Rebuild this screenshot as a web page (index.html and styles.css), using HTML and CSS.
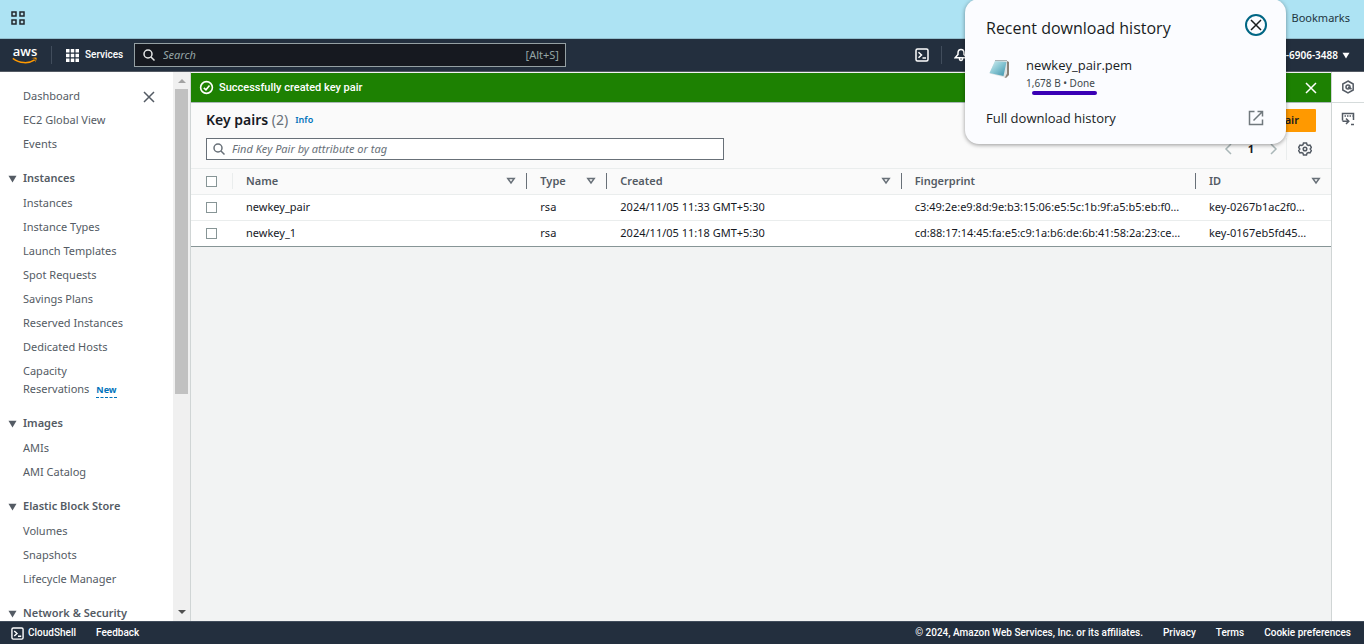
FILE: index.html
```
<!DOCTYPE html>
<html lang="en">
<head>
<meta charset="utf-8">
<title>Key pairs | EC2</title>
<link rel="stylesheet" href="styles.css">
</head>
<body>
<svg class="defs" aria-hidden="true">
  <symbol id="close" viewBox="0 0 12 12"><path d="M1 1l10 10M11 1L1 11"/></symbol>
  <symbol id="search" viewBox="0 0 12 12"><circle cx="5" cy="5" r="4"/><path d="M8 8l3.5 3.5"/></symbol>
  <symbol id="shell" viewBox="0 0 14 14"><rect x="1" y="1" width="12" height="12" rx="1.5"/><path d="M3.5 4.2L6.5 7l-3 2.800M7.500 10h3.500"/></symbol>
  <symbol id="sort" viewBox="0 0 10 8"><path d="M1.800 1.500h6.400L5 6z"/></symbol>
  <symbol id="caret" viewBox="0 0 9 8"><path d="M.5 .8h8L4.500 7.500z"/></symbol>
</svg>

<header class="browser-bar">
  <button class="icon-button" aria-label="Tab groups">
    <svg class="tabs-icon" viewBox="0 0 14 14"><path d="M1 1h4v4H1zM9 1h4v4H9zM1 9h4v4H1zM9 9h4v4H9z"/></svg>
  </button>
  <span class="bookmarks">Bookmarks</span>
</header>

<nav class="top-nav" aria-label="Console">
  <a class="logo" href="#" aria-label="aws">
    <span class="logo-word">aws</span>
    <svg class="logo-smile" viewBox="0 0 26 7"><path class="smile" d="M.8 1.300C7.500 6.500 16.500 7 22.700 2.900"/><path class="smile-tip" d="M19.500 1.300c2-1 4.500-1 5-.5.500.6 0 3-1.600 4.800.6-1.800 1-3.200.6-3.600s-2.100-.5-4-.7z"/></svg>
  </a>
  <button class="services">
    <svg viewBox="0 0 13 13"><path d="M0 0h3.500v3.500H0zM4.750 0h3.500v3.500h-3.500zM9.500 0H13v3.500H9.500zM0 4.750h3.500v3.500H0zM4.750 4.750h3.500v3.500h-3.500zM9.500 4.750H13v3.500H9.500zM0 9.500h3.500V13H0zM4.750 9.500h3.500V13h-3.500zM9.500 9.500H13V13H9.500z"/></svg>
    Services
  </button>
  <label class="nav-search">
    <svg class="line"><use href="#search"/></svg>
    <input type="search" placeholder="Search" aria-label="Search">
    <span>[Alt+S]</span>
  </label>
  <div class="nav-tools">
    <button class="icon-button" aria-label="CloudShell"><svg class="shell-icon"><use href="#shell"/></svg></button>
    <button class="icon-button bell" aria-label="Notifications"><svg viewBox="0 0 14 14"><path d="M7 1.500C5 1.500 4 3 4 5v1.500L1.200 9.800h11.600L10 6.500V5c0-2-1-3.500-3-3.500zM5.500 10.500c0 2.600 3 2.600 3 0"/></svg></button>
  </div>
  <button class="account">-6906-3488 <svg><use href="#caret"/></svg></button>
</nav>

<div class="workspace">
  <aside class="sidebar">
    <div class="side-nav">
      <button class="icon-button side-close" aria-label="Close navigation"><svg class="line"><use href="#close"/></svg></button>
      <ul>
        <li><a href="#">Dashboard</a></li>
        <li><a href="#">EC2 Global View</a></li>
        <li><a href="#">Events</a></li>
      </ul>
      <h2><svg><use href="#caret"/></svg>Instances</h2>
      <ul>
        <li><a href="#">Instances</a></li>
        <li><a href="#">Instance Types</a></li>
        <li><a href="#">Launch Templates</a></li>
        <li><a href="#">Spot Requests</a></li>
        <li><a href="#">Savings Plans</a></li>
        <li><a href="#">Reserved Instances</a></li>
        <li><a href="#">Dedicated Hosts</a></li>
        <li class="tagged"><a href="#">Capacity<br>Reservations</a><a class="new" href="#">New</a></li>
      </ul>
      <h2><svg><use href="#caret"/></svg>Images</h2>
      <ul>
        <li><a href="#">AMIs</a></li>
        <li><a href="#">AMI Catalog</a></li>
      </ul>
      <h2><svg><use href="#caret"/></svg>Elastic Block Store</h2>
      <ul>
        <li><a href="#">Volumes</a></li>
        <li><a href="#">Snapshots</a></li>
        <li><a href="#">Lifecycle Manager</a></li>
      </ul>
      <h2><svg><use href="#caret"/></svg>Network &amp; Security</h2>
    </div>
    <div class="scrollbar" aria-hidden="true">
      <svg class="up" viewBox="0 0 8 4"><path d="M0 4l4-4 4 4z"/></svg>
      <div class="thumb"></div>
      <svg class="down" viewBox="0 0 8 4"><path d="M0 0h8L4 4z"/></svg>
    </div>
  </aside>

  <main>
    <div class="flash" role="status">
      <svg class="ok" viewBox="0 0 14 14"><circle cx="7" cy="7" r="5.500"/><path d="M4.500 7.300l2 1.900 3.300-4"/></svg>
      <span>Successfully created key pair</span>
      <button class="icon-button" aria-label="Dismiss"><svg class="line"><use href="#close"/></svg></button>
    </div>
    <section class="panel">
      <div class="panel-head">
        <div class="title-row">
          <h1>Key pairs <span>(2)</span></h1>
          <a href="#">Info</a>
          <button class="create">Create key pair</button>
        </div>
        <div class="filter-row">
          <label class="filter">
            <svg class="line"><use href="#search"/></svg>
            <input type="text" placeholder="Find Key Pair by attribute or tag" aria-label="Find Key Pair">
          </label>
          <div class="pager">
            <button class="icon-button" aria-label="Previous page"><svg viewBox="0 0 8 12"><path d="M7 1L2 6l5 5"/></svg></button>
            <button class="page">1</button>
            <button class="icon-button" aria-label="Next page"><svg viewBox="0 0 8 12"><path d="M1 1l5 5-5 5"/></svg></button>
          </div>
          <button class="icon-button settings" aria-label="Preferences"><svg viewBox="0 0 14 14"><path d="M5.500 1h3l.5 1.700 1.300.7 1.700-.4 1.400 2.400L12.200 7l1.200 1.600L12 11l-1.700-.4-1.300.7-.5 1.700h-3L5 11.300l-1.300-.7L2 11 .6 8.600 1.800 7 .6 5.400 2 3l1.700.4L5 2.700z"/><circle cx="7" cy="7" r="1.800"/></svg></button>
        </div>
      </div>
      <table>
        <colgroup><col class="c-check"><col><col class="c-type"><col><col><col class="c-id"></colgroup>
        <thead>
          <tr>
            <th><div class="cell"><input type="checkbox" aria-label="Select all"></div></th>
            <th><div class="cell">Name<svg><use href="#sort"/></svg></div></th>
            <th><div class="cell">Type<svg><use href="#sort"/></svg></div></th>
            <th><div class="cell">Created<svg><use href="#sort"/></svg></div></th>
            <th><div class="cell">Fingerprint</div></th>
            <th><div class="cell">ID<svg><use href="#sort"/></svg></div></th>
          </tr>
        </thead>
        <tbody>
          <tr>
            <td><input type="checkbox" aria-label="Select newkey_pair"></td>
            <td>newkey_pair</td><td>rsa</td><td>2024/11/05 11:33 GMT+5:30</td>
            <td>c3:49:2e:e9:8d:9e:b3:15:06:e5:5c:1b:9f:a5:b5:eb:f0…</td><td>key-0267b1ac2f0…</td>
          </tr>
          <tr>
            <td><input type="checkbox" aria-label="Select newkey_1"></td>
            <td>newkey_1</td><td>rsa</td><td>2024/11/05 11:18 GMT+5:30</td>
            <td>cd:88:17:14:45:fa:e5:c9:1a:b6:de:6b:41:58:2a:23:ce…</td><td>key-0167eb5fd45…</td>
          </tr>
        </tbody>
      </table>
    </section>
  </main>

  <aside class="tool-rail">
    <button class="icon-button" aria-label="Help"><svg viewBox="0 0 14 14"><path d="M7 1l5.200 3v6L7 13l-5.200-3V4z"/><circle cx="7" cy="7" r="2"/><path d="M7 7l3.500 2"/></svg></button>
    <button class="icon-button" aria-label="Tutorials"><svg viewBox="0 0 14 14"><path d="M1.500 8.500v-7h11V8M1.500 9.300h5.500M5 6.500l2.800 2.800L5 12M10 12.500h3"/><path stroke-dasharray="1.500 1" d="M3.500 4h8"/></svg></button>
  </aside>
</div>

<footer>
  <button class="shell-link"><svg class="shell-icon"><use href="#shell"/></svg>CloudShell</button>
  <a href="#">Feedback</a>
  <span class="legal">© 2024, Amazon Web Services, Inc. or its affiliates.</span>
  <a href="#">Privacy</a>
  <a href="#">Terms</a>
  <a href="#">Cookie preferences</a>
</footer>

<section class="downloads" aria-label="Recent download history">
  <div class="dl-head">
    <h2>Recent download history</h2>
    <button class="dl-close" aria-label="Close"><svg class="line"><use href="#close"/></svg></button>
  </div>
  <div class="dl-item">
    <svg class="file-icon" viewBox="0 0 22 20">
      <defs><linearGradient id="pad" x1="0" y1="0" x2="1" y2="1"><stop offset="0" stop-color="#d8f0f2"/><stop offset=".45" stop-color="#8cc9d5"/><stop offset="1" stop-color="#3b91ab"/></linearGradient></defs>
      <path fill="#8a8177" d="M18 2l2 1v13l-3 3-2-1z"/><path fill="#dfe3e3" d="M.5 14.500L6 2l12-.5v13l-2 4z"/><path fill="url(#pad)" d="M.5 14L6 2l11.500 1-3 14z"/><path fill="none" stroke="#a8b2b4" d="M6 1.500h12"/>
    </svg>
    <div>
      <p class="dl-name">newkey_pair.pem</p>
      <p class="dl-meta">1,678 B • Done</p>
      <div class="marker"></div>
    </div>
  </div>
  <a class="dl-all" href="#">Full download history
    <svg viewBox="0 0 16 16"><path d="M6.500 1.500h-5v13h13v-5M9.500 1.500h5v5M14 2L5.500 10.500"/></svg>
  </a>
</section>
</body>
</html>
```

FILE: styles.css
```
* { box-sizing: border-box; }
body {
  margin: 0;
  height: 100vh;
  display: flex;
  flex-direction: column;
  overflow: hidden;
  position: relative;
  font: 11px/18px "Noto Sans", "Open Sans", sans-serif;
  color: #16191f;
}
button { font: inherit; color: inherit; background: none; border: 0; padding: 0; }
a { color: inherit; text-decoration: none; }
ul, h1, h2, p { margin: 0; padding: 0; list-style: none; }
input { font: inherit; margin: 0; }
svg { display: block; flex: none; }
.defs { width: 0; height: 0; position: absolute; }
.line { fill: none; stroke: currentColor; stroke-width: 1.5; }
.icon-button { display: flex; align-items: center; justify-content: center; }

.browser-bar {
  flex: none;
  height: 39px;
  padding: 0 14px 3px 11px;
  display: flex;
  align-items: center;
  justify-content: space-between;
  background: #ade3f3;
  border-bottom: 1px solid #93bfce;
}
.tabs-icon { width: 14px; height: 14px; fill: #b9ddea; stroke: #20282e; stroke-width: 1.5; }
.bookmarks { font: 11px/16px "Noto Sans", sans-serif; color: #1d3540; }

.top-nav {
  flex: none;
  height: 33px;
  display: flex;
  align-items: center;
  background: #232f3e;
  border-bottom: 1px solid #545b64;
  color: #fff;
}
.logo { width: 52px; height: 18px; padding-left: 12px; border-right: 1px solid #414d5c; }
.logo-word { display: block; width: 26px; text-align: center; font: 600 13px/11px "Open Sans", sans-serif; }
.logo-smile { width: 26px; height: 7px; }
.smile { fill: none; stroke: #f90; stroke-width: 1.5; }
.smile-tip { fill: #f90; }
.services { margin-left: 14px; width: 68px; display: flex; align-items: center; gap: 6px; font: 500 10px/16px Roboto, sans-serif; }
.services svg { width: 13px; height: 13px; fill: #fff; }
.nav-search {
  width: 432px;
  height: 24px;
  padding: 0 6px 0 8px;
  display: flex;
  align-items: center;
  gap: 8px;
  background: #161920;
  border: 1px solid #95a0a3;
  color: #95a5a6;
}
.nav-search svg { width: 12px; height: 12px; color: #e6e8e8; }
.nav-search input { flex: 1; min-width: 0; padding: 0; border: 0; background: none; color: #fff; }
.nav-search input::placeholder { color: #95a5a6; font-style: italic; }
.nav-tools { margin-left: auto; display: flex; align-items: center; }
.nav-tools .icon-button { width: 38px; height: 18px; border-right: 1px solid #414d5c; }
.nav-tools .bell { border: 0; }
.nav-tools svg { width: 14px; height: 14px; fill: none; stroke: #fff; stroke-width: 1.5; }
.shell-icon { width: 14px; height: 14px; fill: none; stroke: #fff; stroke-width: 1.5; }
.account { margin-left: 306px; margin-right: 14px; display: flex; align-items: center; gap: 4px; font: 600 10px/16px "Noto Sans", sans-serif; }
.account svg { width: 8px; height: 7px; fill: #fff; }

.workspace { flex: 1; min-height: 0; display: flex; background: #f2f3f3; }
.sidebar { flex: none; width: 191px; display: flex; background: #fff; border-right: 1px solid #d0d5d5; }
.side-nav { flex: 1; position: relative; overflow: hidden; padding-top: 15px; color: #545b64; }
.side-close { position: absolute; top: 19px; right: 18px; }
.side-close svg { width: 12px; height: 12px; }
.side-nav li { margin-bottom: 6px; padding-left: 23px; }
.side-nav .tagged { margin-bottom: 5px; }
.side-nav h2 { display: flex; align-items: center; gap: 6px; margin: 16px 0 7px; padding-left: 8px; font: 600 11px/18px "Noto Sans", sans-serif; }
.side-nav h2 svg { width: 9px; height: 8px; margin-top: 2px; fill: currentColor; }
.side-nav .new { display: inline-block; margin-left: 7px; border-bottom: 1px dashed #0073bb; color: #0073bb; font: 700 9px/14px "Noto Sans", sans-serif; }
.scrollbar { width: 17px; padding: 7px 0; display: flex; flex-direction: column; align-items: center; background: #f0f0f0; }
.scrollbar svg { width: 8px; height: 4px; fill: #505050; }
.scrollbar .up { fill: #a3a3a3; }
.scrollbar .thumb { width: 13px; height: 57%; margin-top: 6px; background: #c1c1c1; }
.scrollbar .down { margin-top: auto; }

main { flex: 1; min-width: 0; padding-top: 1px; }
.flash { height: 29px; padding: 0 14px 0 8px; display: flex; align-items: center; gap: 5px; background: #1d8102; color: #fff; font: 500 11px/18px Roboto, sans-serif; }
.flash .ok { width: 15px; height: 15px; fill: none; stroke: #fff; stroke-width: 1.5; }
.flash button { margin-left: auto; }
.flash .line { width: 12px; height: 12px; }
.panel { background: #fff; border-top: 1px solid #aab7b8; border-bottom: 1px solid #879596; }
.panel-head { padding: 5px 15px 8px; background: #fafafa; border-bottom: 1px solid #eaeded; }
.title-row { display: flex; align-items: center; gap: 7px; height: 24px; }
h1 { font: 600 14px/22px "Noto Sans", sans-serif; }
h1 span { font-weight: 400; color: #687078; }
.title-row a { color: #0073bb; font: 600 9px/22px "Noto Sans", sans-serif; }
.create { margin-left: auto; height: 23px; padding: 0 17px; background: #f90; border-radius: 1px; font-weight: 600; }
.filter-row { display: flex; align-items: center; margin-top: 6px; height: 22px; }
.filter { width: 518px; height: 22px; padding: 0 6px; display: flex; align-items: center; gap: 7px; background: #fff; border: 1px solid #687078; color: #687078; }
.filter svg { width: 12px; height: 12px; }
.filter input { flex: 1; min-width: 0; padding: 0; border: 0; background: none; }
.filter input::placeholder { color: #687078; font-style: italic; }
.pager { margin-left: auto; height: 22px; padding-right: 8px; display: flex; align-items: center; gap: 16px; border-right: 1px solid #eaeded; font-weight: 700; }
.pager svg { width: 8px; height: 12px; fill: none; stroke: #aab7b8; stroke-width: 1.5; }
.settings { margin: 0 4px 0 11px; }
.settings svg { width: 14px; height: 14px; fill: none; stroke: #545b64; stroke-width: 1.5; }

table { width: 100%; table-layout: fixed; border-collapse: collapse; }
.c-check { width: 42px; }
.c-type { width: 80px; }
.c-id { width: 135px; }
th, td { height: 26px; padding: 0 0 0 13px; text-align: left; white-space: nowrap; overflow: hidden; }
th:first-child, td:first-child { padding-left: 15px; }
th { height: 25px; padding: 0; background: #fafafa; color: #545b64; font-weight: 600; border-bottom: 1px solid #eaeded; }
tbody tr + tr td { border-top: 1px solid #eaeded; }
.cell { display: flex; align-items: center; justify-content: space-between; height: 16px; padding: 0 10px 0 13px; border-right: 1px solid #687078; }
th:first-child .cell { padding: 0; border-color: #eaeded; }
th:last-child .cell { border: 0; }
.cell svg { width: 10px; height: 8px; fill: none; stroke: #687078; stroke-width: 1.5; }
input[type="checkbox"] { appearance: none; display: block; width: 11px; height: 11px; background: #fff; border: 1px solid #879596; }

.tool-rail { flex: none; width: 33px; background: #fff; border-left: 1px solid #d0d5d5; }
.tool-rail button { width: 32px; height: 31px; }
.tool-rail button:first-child { border-bottom: 1px solid #d5dbdb; }
.tool-rail svg { width: 14px; height: 14px; fill: none; stroke: #545b64; stroke-width: 1.5; }

footer {
  flex: none;
  height: 23px;
  padding: 0 13px 0 11px;
  display: flex;
  align-items: center;
  gap: 20px;
  background: #232f3e;
  border-top: 1px solid #414d5c;
  color: #fff;
  font: 500 10px/16px Roboto, sans-serif;
}
.shell-link { display: flex; align-items: center; gap: 4px; }
.shell-link svg { width: 13px; height: 13px; }
.legal { margin-left: auto; }

.downloads {
  position: absolute;
  top: -1px;
  right: 78px;
  width: 321px;
  padding: 15px 19px 17px 21px;
  background: #fbfcff;
  border-radius: 14px;
  box-shadow: 0 1px 4px rgba(0, 0, 0, .4);
  color: #191c1e;
}
.dl-head { display: flex; align-items: center; justify-content: space-between; height: 22px; }
.dl-head h2 { margin-top: 5px; font: 400 16px/22px "Open Sans", sans-serif; }
.dl-close { width: 22px; height: 22px; display: flex; align-items: center; justify-content: center; border: 2px solid #006684; border-radius: 50%; }
.dl-close svg { width: 12px; height: 12px; }
.dl-item { display: flex; gap: 15px; margin: 21px 0 14px 3px; }
.file-icon { width: 22px; height: 20px; margin-top: 2px; }
.dl-name { font: 400 13px/17px "Open Sans", sans-serif; }
.dl-meta { font: 400 10px/18px "Noto Sans", sans-serif; color: #40484c; }
.marker { width: 65px; height: 4px; margin-left: 6px; margin-top: -1px; border-radius: 2px; background: #3a00b5; }
.dl-all { display: flex; align-items: center; justify-content: space-between; padding-right: 3px; font: 400 13px/18px "Open Sans", sans-serif; }
.dl-all svg { width: 16px; height: 16px; fill: none; stroke: #70787d; stroke-width: 1.5; }
```
